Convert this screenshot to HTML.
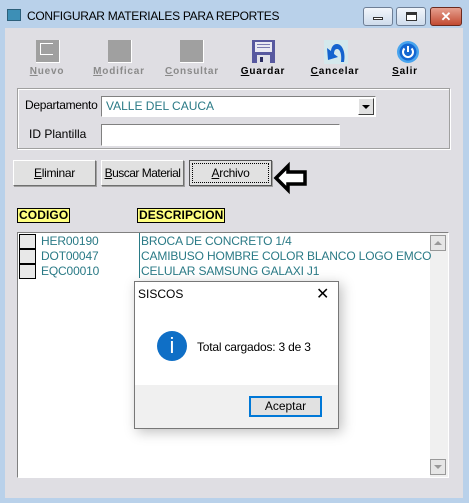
<!DOCTYPE html>
<html><head><meta charset="utf-8"><style>
*{margin:0;padding:0;box-sizing:border-box}
body{width:469px;height:503px;background:#b9d1ea;position:relative;overflow:hidden;font-family:"Liberation Sans",sans-serif;font-size:12px;color:#000}
.a{position:absolute}
.client{left:5px;top:28px;width:458px;height:470px;background:#dfdee3}
.tb{font-size:10px;font-weight:bold;font-family:"Liberation Sans",sans-serif;text-align:center;width:72px;top:66px;letter-spacing:0.8px}
.ico{width:24px;height:23px;background:#a0a0a0;border-right:1px solid #fff;border-bottom:1px solid #fff}
.btn{background:#e1e1e1;border:1px solid;border-color:#fff #707070 #707070 #fff;box-shadow:1px 1px 0 #a0a0a0;height:26px;top:160px;text-align:center;line-height:24px;font-size:12px;white-space:nowrap;letter-spacing:-0.3px}
.wb{top:7px;height:19px;border:1px solid #6e7f96;border-radius:3px;background:linear-gradient(#f2f6fb,#cfdcec)}
.hdr{background:#ffff80;border:1px solid #000;font-weight:bold;font-family:"Liberation Sans",sans-serif;font-size:12px;line-height:13px;padding:0 1px;letter-spacing:0.1px}
.row{left:19px;height:15px;font-size:12px;color:#2a7a86;line-height:15px;letter-spacing:-0.15px}
.cb{position:absolute;left:0;top:0;width:17px;height:15px;background:#e8e8e8;border:1px solid #000}
</style></head><body>
<div class="a" style="left:7px;top:9px;width:14px;height:12px;background:#3d8fb6;border:1px solid #2c5f7a"></div>
<div class="a" style="left:27px;top:9px;font-size:12px;color:#000;letter-spacing:-0.3px">CONFIGURAR MATERIALES PARA REPORTES</div>
<div class="a wb" style="left:363px;width:30px"><div class="a" style="left:9px;top:9px;width:10px;height:3px;background:#fff;border:1px solid #333"></div></div>
<div class="a wb" style="left:396px;width:30px"><div class="a" style="left:9px;top:4px;width:11px;height:9px;border:1px solid #333;border-top:3px solid #333;background:#fff"></div></div>
<div class="a" style="left:430px;top:7px;width:32px;height:19px;border:1px solid #6b2a1e;border-radius:3px;background:linear-gradient(#e6a08f,#c24b32);color:#fff;font-weight:bold;text-align:center;font-size:13px;line-height:17px">✕</div>
<div class="a client"></div>

<div class="a ico" style="left:36px;top:40px"><div class="a" style="left:4px;top:3px;width:13px;height:12px;border:1px solid #fff;border-right:none"></div></div>
<div class="a ico" style="left:108px;top:40px"></div>
<div class="a ico" style="left:180px;top:40px"></div>
<svg class="a" style="left:252px;top:40px" width="23" height="23" viewBox="0 0 23 23"><rect x="0" y="0" width="23" height="23" fill="#57589f"/><rect x="3" y="2" width="17" height="10" fill="#e9e9f2"/><rect x="5" y="4" width="13" height="1" fill="#7a7ab0"/><rect x="5" y="7" width="13" height="1" fill="#7a7ab0"/><rect x="5" y="15" width="13" height="8" fill="#e0e0e8"/><rect x="8" y="17" width="3" height="5" fill="#2b2c60"/></svg>
<svg class="a" style="left:324px;top:40px" width="24" height="24" viewBox="0 0 24 24"><rect width="24" height="24" fill="#d4e8ec"/><path d="M20 22 C22 12 18 4 13 4 C9 4 7 8 7 11 L3 8 L4 20 L14 17 L10 14 C10 11 11 9 13 9 C16 9 18 14 17 22Z" fill="#1463cf"/></svg>
<svg class="a" style="left:396px;top:40px" width="24" height="24" viewBox="0 0 24 24"><circle cx="12" cy="12" r="11" fill="#48a4ee"/><circle cx="12" cy="12" r="8.5" fill="#1466d1"/><path d="M8.5 8.5 A5 5 0 1 0 15.5 8.5" stroke="#fff" stroke-width="2" fill="none"/><path d="M12 6 V12" stroke="#fff" stroke-width="2"/></svg>
<div class="a tb" style="left:11px;color:#8a8a8a"><u>N</u>uevo</div>
<div class="a tb" style="left:83px;color:#8a8a8a"><u>M</u>odificar</div>
<div class="a tb" style="left:156px;color:#8a8a8a"><u>C</u>onsultar</div>
<div class="a tb" style="left:227px"><u>G</u>uardar</div>
<div class="a tb" style="left:299px"><u>C</u>ancelar</div>
<div class="a tb" style="left:369px"><u>S</u>alir</div>

<div class="a" style="left:17px;top:88px;width:433px;height:61px;border:1px solid #a0a0a0;box-shadow:inset 1px 1px 0 #fff,1px 1px 0 #fff"></div>
<div class="a" style="left:25px;top:98px;letter-spacing:-0.3px">Departamento</div>
<div class="a" style="left:101px;top:96px;width:275px;height:21px;background:#fff;border:1px solid;border-color:#808080 #fff #fff #808080;color:#2a7a86;padding-left:4px;line-height:19px">VALLE DEL CAUCA</div>
<div class="a" style="left:358px;top:98px;width:16px;height:17px;background:#e1e1e1;border:1px solid;border-color:#fff #404040 #404040 #fff"><div class="a" style="left:3px;top:6px;border-left:4px solid transparent;border-right:4px solid transparent;border-top:4px solid #000"></div></div>
<div class="a" style="left:29px;top:127px">ID Plantilla</div>
<div class="a" style="left:101px;top:124px;width:239px;height:22px;background:#fff;border:1px solid;border-color:#808080 #fff #fff #808080"></div>

<div class="a btn" style="left:13px;width:83px"><u>E</u>liminar</div>
<div class="a btn" style="left:101px;width:83px;letter-spacing:-0.5px"><u>B</u>uscar Material</div>
<div class="a btn" style="left:189px;width:83px;border:1px solid #555"><div style="margin:2px;border:1px dotted #000;line-height:18px"><u>A</u>rchivo</div></div>
<svg class="a" style="left:273px;top:160px" width="36" height="36" viewBox="0 0 36 36"><path d="M3 18 L15 6 L15 12 L32 12 L32 24 L15 24 L15 30 Z" fill="#fff" stroke="#000" stroke-width="3.5" stroke-linejoin="miter"/></svg>

<div class="a hdr" style="left:17px;top:208px">CODIGO</div>
<div class="a hdr" style="left:137px;top:208px">DESCRIPCION</div>

<div class="a" style="left:17px;top:232px;width:432px;height:246px;background:#fff;border:1px solid;border-color:#808080 #fff #fff #808080"></div>
<div class="a" style="left:430px;top:233px;width:18px;height:244px;background:#f0f0f0"></div>
<div class="a" style="left:430px;top:235px;width:16px;height:16px;background:#e6e6e6;border:1px solid #999"><div class="a" style="left:3px;top:5px;border-left:4px solid transparent;border-right:4px solid transparent;border-bottom:4px solid #999"></div></div>
<div class="a" style="left:430px;top:459px;width:16px;height:16px;background:#e6e6e6;border:1px solid #999"><div class="a" style="left:3px;top:5px;border-left:4px solid transparent;border-right:4px solid transparent;border-top:4px solid #999"></div></div>
<div class="a" style="left:139px;top:233px;width:1px;height:45px;background:#2a7a86"></div>
<div class="a row" style="top:234px;width:410px"><div class="cb"></div><span class="a" style="left:22px">HER00190</span><span class="a" style="left:122px">BROCA DE CONCRETO 1/4</span></div>
<div class="a row" style="top:249px;width:410px"><div class="cb"></div><span class="a" style="left:22px">DOT00047</span><span class="a" style="left:122px;white-space:nowrap">CAMIBUSO HOMBRE COLOR BLANCO LOGO EMCO</span></div>
<div class="a row" style="top:264px;width:410px"><div class="cb"></div><span class="a" style="left:22px">EQC00010</span><span class="a" style="left:122px;white-space:nowrap">CELULAR SAMSUNG GALAXI J1</span></div>

<div class="a" style="left:134px;top:281px;width:205px;height:148px;background:#fff;border:1px solid #777;box-shadow:3px 3px 12px rgba(0,0,0,.25)"></div>
<div class="a" style="left:138px;top:287px;font-size:12px">SISCOS</div>
<div class="a" style="left:316px;top:284px;font-size:16px;font-weight:300">✕</div>
<div class="a" style="left:135px;top:385px;width:203px;height:43px;background:#f0f0f0"></div>
<div class="a" style="left:157px;top:331px;width:30px;height:30px;border-radius:50%;background:#0f6fc6;color:#fff;text-align:center;font-size:22px;line-height:30px">i</div>
<div class="a" style="left:197px;top:340px;font-size:12px;letter-spacing:-0.2px">Total cargados: 3 de 3</div>
<div class="a" style="left:249px;top:396px;width:73px;height:21px;background:#e1e1e1;border:2px solid #0078d7;text-align:center;line-height:17px;font-size:12px">Aceptar</div>
</body></html>
